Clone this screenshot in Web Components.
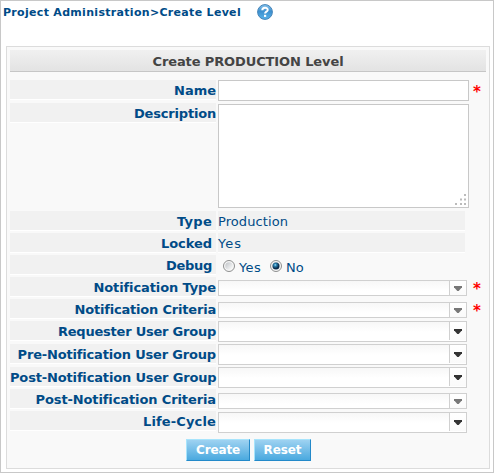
<!DOCTYPE html>
<html lang="en"><head><meta charset="utf-8"><title>Create Level</title>
<style>
html,body{margin:0;height:100%;overflow:hidden}
body{font-family:"DejaVu Sans",Verdana,sans-serif;font-size:13px;color:#004b87;background:#fff}
</style></head><body>
<level-page></level-page>
<script>
const define=(name,html,init)=>{
  const t=document.createElement('template');t.innerHTML=html;
  customElements.define(name,class extends HTMLElement{
    constructor(){super();this.attachShadow({mode:'open'}).append(t.content.cloneNode(true));}
    connectedCallback(){if(init)init.call(this,this.shadowRoot);}
  });
};

// Text that spaces its letters to occupy the width given in "w".
define('fit-text',`<style>:host{display:inline-block;white-space:nowrap;line-height:19px}span{display:inline-block}</style><span><slot></slot></span>`,
function(root){
  const s=root.querySelector('span'),w=+this.getAttribute('w');
  const n=this.textContent.length,natural=s.getBoundingClientRect().width;
  if(w&&n){const gap=(w-natural)/n;s.style.letterSpacing=gap.toFixed(3)+'px';}
});

define('help-icon',`<style>:host{display:block;width:16px;height:16px}svg{display:block}</style>
<svg width="16" height="16" viewBox="0 0 16 16"><defs><linearGradient id="g" x2="0" y2="1"><stop stop-color="#8cc8f0"/><stop offset=".45" stop-color="#3c8fce"/><stop offset="1" stop-color="#58b3ea"/></linearGradient></defs>
<circle cx="8" cy="8" r="7.4" fill="url(#g)" stroke="#4684b8" stroke-width="1"/><path d="M5.3 6.2C5.3 2.9 10.7 3 10.7 5.9C10.7 7.7 8.1 7.6 8.1 9.5" fill="none" stroke="#fff" stroke-width="2"/><rect x="7" y="10.8" width="2.2" height="2.1" fill="#fff"/></svg>`);

define('text-box',`<style>:host{display:block;box-sizing:border-box;width:251px;height:21px;border:1px solid #c8c8c8;background:#fff}
:host([area]){height:104px;display:flex;justify-content:flex-end;align-items:flex-end}svg{display:none}:host([area]) svg{display:block}</style>
<svg width="14" height="14" fill="#bbb"><path d="M10 1h2v2h-2zM6 5.500h2v2h-2zM10 5.500h2v2h-2zM1 10h2v2h-2zM6 10h2v2h-2zM10 10h2v2h-2z"/></svg>`);

define('combo-box',`<style>:host{display:flex;box-sizing:border-box;width:249px;height:21px;border:1px solid #d0d0d0;background:linear-gradient(#f7f7f7,#fff 10px);--arrow:#333}
:host([short]){height:16px;margin-top:3px;--arrow:#777}
div{flex:1}i{width:16px;border-left:1px solid #d0d0d0;margin-bottom:1px;display:flex;justify-content:center;align-items:center;background:linear-gradient(#fff,#fafafa)}
:host([short]) i{margin-bottom:0}svg{display:block;fill:var(--arrow)}</style>
<div></div><i><svg width="8" height="5"><path d="M0 0h8v1.300L4.700 5H3.300L0 1.300z"/></svg></i>`);

define('static-value',`<style>:host{display:block;box-sizing:border-box;width:247px;height:20px;background:#f1f1f1;border-bottom:1px solid #fff;padding-top:1px}</style><slot></slot>`);

define('radio-option',`<style>:host{display:flex;align-items:center;height:22px}svg{display:block;margin-right:4px}circle.dot{display:none}:host([checked]) .dot{display:block}::slotted(*){margin-top:3px}</style>
<svg width="12" height="12" viewBox="0 0 12 12"><defs><linearGradient id="r" x2="1" y2="1"><stop stop-color="#bfc3c7"/><stop offset="1" stop-color="#fff"/></linearGradient><radialGradient id="d" cx=".4" cy=".35"><stop stop-color="#a9e6ff"/><stop offset=".35" stop-color="#2d87b5"/><stop offset="1" stop-color="#0b2c4c"/></radialGradient></defs>
<circle cx="6" cy="6" r="5.500" fill="#f7f7f7" stroke="#8e8f8f"/><circle cx="6" cy="6" r="3.800" fill="url(#r)"/><circle class="dot" cx="6" cy="6" r="3.500" fill="url(#d)"/></svg><slot></slot>`);

define('form-row',`<style>:host{display:grid;grid-template-columns:206px 251px 1fr;column-gap:2px;height:22px;align-items:start}
.label{height:20px;box-sizing:border-box;background:#f1f1f1;border-bottom:1px solid #fff;font-weight:bold;text-align:right;white-space:nowrap;padding-top:1px}
:host([raised]) .label{margin-top:-1px}:host([inset]) .label{padding-right:4px}.star{display:none;color:#f00;font-weight:bold;font-size:15px;line-height:24px;padding-left:2px}:host([required]) .star{display:block}</style>
<div class="label"><slot name="label"></slot></div><div><slot></slot></div><span class="star">*</span>`);

define('push-button',`<style>:host{display:block;box-sizing:border-box;height:22px;border:1px solid;border-color:#a7e4fc #2389c9 #2389c9 #a7e4fc;background:linear-gradient(#9ed2f1,#4aa9df);color:#fff;font-weight:bold;font-size:12px;text-align:center;padding-top:1px}</style><slot></slot>`);

define('form-panel',`<style>:host{display:block;box-sizing:border-box;width:484px;height:423px;border:1px solid #dcdcdc;background:#f9f9f9;padding:3px}
h2{margin:0 0 8px;height:22px;box-sizing:border-box;border-bottom:1px solid #c6c6c6;background:linear-gradient(#f0f0f0,#e3e3e3);font-size:13px;color:#444;text-align:center;padding-top:2px}
footer{display:flex;gap:4px;margin-left:176px}</style><h2><slot name="title"></slot></h2><slot></slot><footer><slot name="actions"></slot></footer>`);

define('level-page',`<style>:host{display:block;box-sizing:border-box;width:494px;height:473px;border:1px solid #c8c8c8;background:#fff;padding:0 0 0 2px}
header{display:flex;height:45px;font-size:11px;font-weight:bold;padding-top:2px;box-sizing:border-box}
help-icon{margin:1px 0 0 16px}form-panel{margin-left:3px}</style>
<header><fit-text w="238">Project Administration&gt;Create Level</fit-text><help-icon></help-icon></header>
<form-panel><fit-text slot="title" w="191">Create PRODUCTION Level</fit-text>
<form-row required style="height:24px"><fit-text slot="label" w="42">Name</fit-text><text-box></text-box></form-row>
<form-row raised style="height:107px"><fit-text slot="label" w="82">Description</fit-text><text-box area></text-box></form-row>
<form-row inset><fit-text slot="label" w="35">Type</fit-text><static-value><fit-text w="70">Production</fit-text></static-value></form-row>
<form-row inset><fit-text slot="label" w="51">Locked</fit-text><static-value><fit-text w="24">Yes</fit-text></static-value></form-row>
<form-row inset><fit-text slot="label" w="46">Debug</fit-text><div style="display:flex;gap:9px;padding-left:5px"><radio-option><fit-text w="22">Yes</fit-text></radio-option><radio-option checked><fit-text w="18">No</fit-text></radio-option></div></form-row>
<form-row required><fit-text slot="label" w="122">Notification Type</fit-text><combo-box short></combo-box></form-row>
<form-row required><fit-text slot="label" w="141">Notification Criteria</fit-text><combo-box short></combo-box></form-row>
<form-row style="height:23px"><fit-text slot="label" w="158">Requester User Group</fit-text><combo-box></combo-box></form-row>
<form-row style="height:23px"><fit-text slot="label" w="198">Pre-Notification User Group</fit-text><combo-box></combo-box></form-row>
<form-row style="height:23px"><fit-text slot="label" w="206">Post-Notification User Group</fit-text><combo-box></combo-box></form-row>
<form-row raised><fit-text slot="label" w="180">Post-Notification Criteria</fit-text><combo-box short></combo-box></form-row>
<form-row raised style="height:27px"><fit-text slot="label" w="73">Life-Cycle</fit-text><combo-box></combo-box></form-row>
<push-button slot="actions" style="width:64px"><fit-text w="44">Create</fit-text></push-button><push-button slot="actions" style="width:57px"><fit-text w="38">Reset</fit-text></push-button>
</form-panel>`);
</script></body></html>
